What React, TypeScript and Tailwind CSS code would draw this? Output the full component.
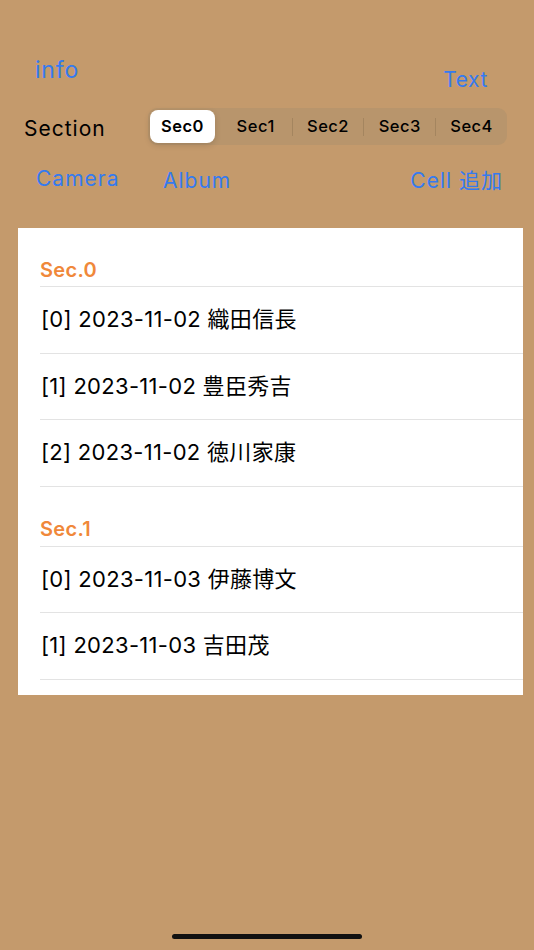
const font = { fontFamily: '"Inter", "Noto Sans CJK JP", sans-serif' };

const sections = [
  {
    title: "Sec.0",
    rows: ["[0] 2023-11-02 織田信長", "[1] 2023-11-02 豊臣秀吉", "[2] 2023-11-02 徳川家康"],
  },
  {
    title: "Sec.1",
    rows: ["[0] 2023-11-03 伊藤博文", "[1] 2023-11-03 吉田茂"],
  },
];

const segs = ["Sec0", "Sec1", "Sec2", "Sec3", "Sec4"];

export default function App() {
  return (
    <div
      className="w-[534px] h-[950px] bg-[#c49a6c] flex flex-col relative overflow-hidden"
      style={font}
    >
      {/* top buttons */}
      <div className="flex justify-between items-start pt-[55px] h-[100px]">
        <div className="pl-[35px] text-[23px] tracking-[0.8px] text-[#357af0] leading-[30px]">info</div>
        <div className="pr-[46px] pt-[10px] text-[21px] tracking-[0.6px] text-[#357af0] leading-[30px]">Text</div>
      </div>

      {/* section picker */}
      <div className="flex items-center h-[53px] pl-[24px] pr-[27px]">
        <div className="text-[21px] tracking-[1px] text-black w-[124px] pt-[4px]">Section</div>
        <div className="flex-1 h-[37px] rounded-[9px] bg-[#b8956c] flex items-center">
          {segs.map((s, i) => (
            <div key={s} className="flex-1 flex items-center h-full">
              {i > 1 && <div className="w-px h-[18px] bg-[#a4855f]" />}
              <div
                className={
                  i === 0
                    ? "flex-1 h-[33px] ml-[2px] mr-[5px] rounded-[8px] bg-white shadow-[0_2px_6px_rgba(0,0,0,0.15)] flex items-center justify-center text-[16.5px] tracking-[0.5px] font-semibold text-black"
                    : "flex-1 h-[33px] flex items-center justify-center text-[16.5px] tracking-[0.5px] font-medium text-black"
                }
              >
                {s}
              </div>
            </div>
          ))}
        </div>
      </div>

      {/* action buttons */}
      <div className="flex items-center h-[52px] text-[21px] tracking-[1px] text-[#357af0]">
        <div className="pl-[36px] w-[163px]">Camera</div>
        <div className="flex-1 pt-[3px]">Album</div>
        <div className="pr-[31px] pt-[3px]">Cell 追加</div>
      </div>

      {/* table */}
      <div className="mt-[23px] ml-[18px] mr-[11px] bg-white pb-[15px]">
        {sections.map((sec, si) => (
          <div key={sec.title}>
            <div
              className={
                si === 0
                  ? "h-[58px] flex items-end pl-[22px] pb-[1px] text-[20px] tracking-[0.3px] font-semibold text-[#f0883a]"
                  : "h-[59px] flex items-end pl-[22px] pb-[2px] text-[20px] tracking-[0.3px] font-semibold text-[#f0883a]"
              }
            >
              {sec.title}
            </div>
            {sec.rows.map((r) => (
              <div key={r} className="ml-[22px] border-t border-[#e3e3e3] h-[66.5px] flex items-center pl-[1px] text-[22px] tracking-[0.3px] text-black">
                {r}
              </div>
            ))}
            <div className="ml-[22px] border-t border-[#e3e3e3]" />
          </div>
        ))}
      </div>

      {/* home indicator */}
      <div className="absolute bottom-[11px] left-[172px] w-[190px] h-[5px] rounded-full bg-[#111]" />
    </div>
  );
}
